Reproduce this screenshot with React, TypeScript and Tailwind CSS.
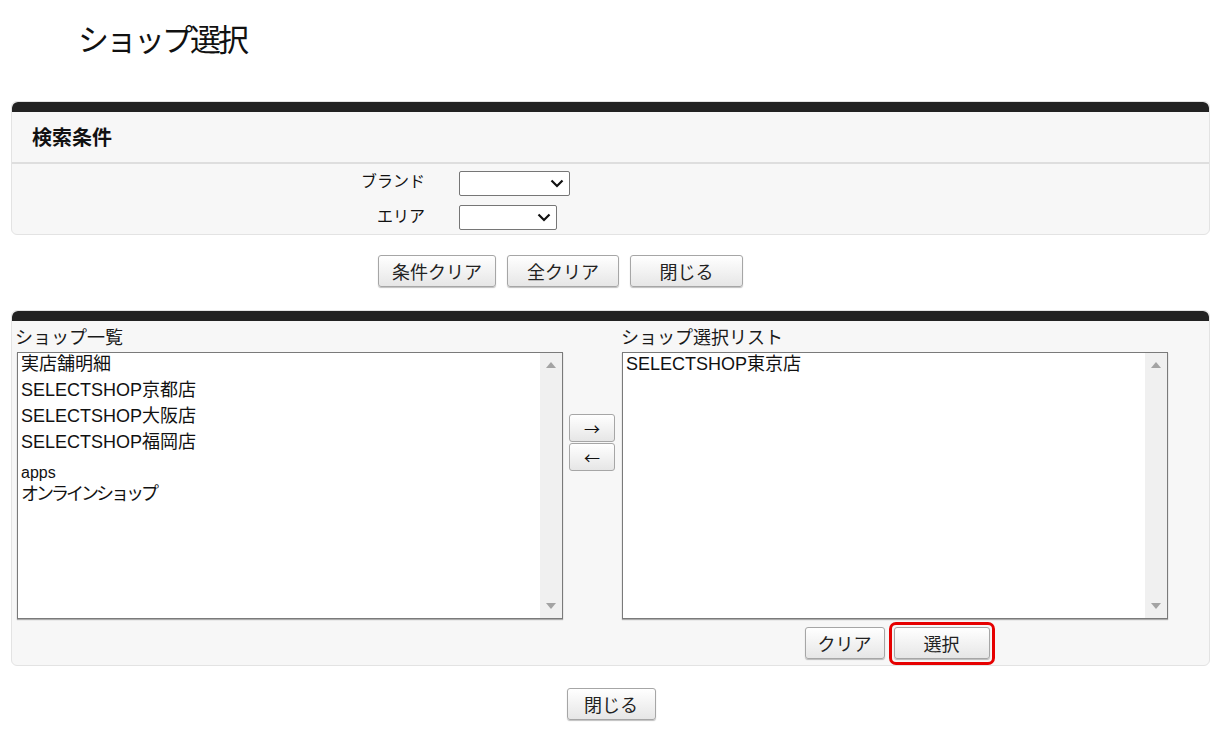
import React from 'react';

const jp = { fontFamily: '"Noto Sans CJK JP", "Liberation Sans", sans-serif' };
const listFont = { fontFamily: '"Liberation Sans", "Noto Sans CJK JP", sans-serif' };

const Btn: React.FC<{ label: string; w: string; className?: string }> = ({ label, w, className = '' }) => (
  <button
    className={`${w} h-[32px] rounded-[3px] border border-[#a6a6a6] bg-gradient-to-b from-white to-[#e6e6e6] text-[18px] text-[#222] leading-none shadow-[0_1px_1px_rgba(0,0,0,0.25)] ${className}`}
    style={jp}
  >
    {label}
  </button>
);

const FakeSelect: React.FC<{ w: string }> = ({ w }) => (
  <div className={`${w} h-[25px] bg-white border border-[#767676] rounded-[2px] flex items-center justify-end pr-[5px]`}>
    <svg width="14" height="9" viewBox="0 0 14 9">
      <path d="M1.5 1.5 L7 7 L12.5 1.5" fill="none" stroke="#111" strokeWidth="2.2" />
    </svg>
  </div>
);

const ListBox: React.FC<{ items: string[] }> = ({ items }) => (
  <div className="w-[546px] h-[267px] bg-white border border-[#7a7a7a] shadow-[0_1px_1px_rgba(0,0,0,0.3)] flex">
    <div className="flex-1 pl-[3px] text-[18px] text-[#111]" style={listFont}>
      {items.map((it, i) => (
        <div
          key={i}
          className={`h-[26px] leading-[22px] ${it === 'apps' ? 'text-[16px] pt-[4px] leading-[24px]' : ''} ${it === 'オンラインショップ' ? 'tracking-[-3px]' : ''}`}
        >
          {it}
        </div>
      ))}
    </div>
    <div className="w-[22px] bg-[#f0f0f0] flex flex-col justify-between items-center py-[9px]">
      <svg width="10" height="6" viewBox="0 0 10 6"><path d="M0 6 L5 0 L10 6 Z" fill="#a3a3a3" /></svg>
      <svg width="10" height="6" viewBox="0 0 10 6"><path d="M0 0 L5 6 L10 0 Z" fill="#a3a3a3" /></svg>
    </div>
  </div>
);

export default function App() {
  return (
    <div className="w-[1222px] h-[733px] bg-white text-[#111] overflow-hidden" style={jp}>
      {/* Title */}
      <h1 className="pl-[78px] pt-[16px] h-[101px] text-[31px] leading-[44px] font-normal tracking-[-3px]">
        ショップ選択
      </h1>

      {/* Search conditions */}
      <div className="mx-[11px] w-[1199px] rounded-[6px] border border-[#e3e3e3] bg-[#f7f7f7] overflow-hidden">
        <div className="h-[10px] bg-[#222] rounded-t-[6px]" />
        <div className="h-[52px] flex items-center pl-[20px] text-[20px] font-bold border-b-2 border-[#dedede]">
          検索条件
        </div>
        <div className="pt-[7px] pb-[4px] flex flex-col gap-[9px]">
          <div className="flex items-center h-[25px]">
            <div className="w-[413px] text-right text-[16px] leading-[20px] -mt-[8px]">ブランド</div>
            <div className="w-[34px]" />
            <FakeSelect w="w-[111px]" />
          </div>
          <div className="flex items-center h-[25px]">
            <div className="w-[413px] text-right text-[16px] leading-[20px] -mt-[6px]">エリア</div>
            <div className="w-[34px]" />
            <FakeSelect w="w-[98px]" />
          </div>
        </div>
      </div>

      <div className="pl-[378px] mt-[20px] flex gap-[11px]">
        <Btn label="条件クリア" w="w-[118px]" />
        <Btn label="全クリア" w="w-[112px]" />
        <Btn label="閉じる" w="w-[113px]" />
      </div>

      {/* Shop lists */}
      <div className="mx-[11px] mt-[23px] w-[1199px] rounded-[6px] border border-[#e3e3e3] bg-[#f7f7f7] overflow-hidden">
        <div className="h-[10px] bg-[#222] rounded-t-[6px]" />
        <div className="flex pl-[5px] pb-[6px]">
          <div className="flex flex-col">
            <div className="h-[31px] -ml-[2px] text-[18px] leading-[30px] text-[#1a1a1a]">ショップ一覧</div>
            <ListBox items={['実店舗明細', 'SELECTSHOP京都店', 'SELECTSHOP大阪店', 'SELECTSHOP福岡店', 'apps', 'オンラインショップ']} />
          </div>
          <div className="ml-[6px] mt-[93px] flex flex-col gap-[1px]">
            <button className="w-[46px] h-[28px] rounded-[3px] border border-[#a6a6a6] bg-gradient-to-b from-white to-[#e6e6e6] text-[16px] leading-none">→</button>
            <button className="w-[46px] h-[28px] rounded-[3px] border border-[#a6a6a6] bg-gradient-to-b from-white to-[#e6e6e6] text-[16px] leading-none">←</button>
          </div>
          <div className="ml-[7px] flex flex-col">
            <div className="h-[31px] -ml-[1px] text-[18px] leading-[30px] text-[#1a1a1a]">ショップ選択リスト</div>
            <ListBox items={['SELECTSHOP東京店']} />
            <div className="mt-[8px] flex justify-center gap-[9px] pl-[4px]">
              <Btn label="クリア" w="w-[80px]" />
              <div className="relative">
                <Btn label="選択" w="w-[96px]" />
                <div className="absolute -left-[5px] -top-[5px] -right-[5px] -bottom-[6px] border-[3px] border-[#e60000] rounded-[7px] pointer-events-none" />
              </div>
            </div>
          </div>
        </div>
      </div>

      <div className="mt-[22px] flex justify-center">
        <Btn label="閉じる" w="w-[89px]" />
      </div>
    </div>
  );
}
